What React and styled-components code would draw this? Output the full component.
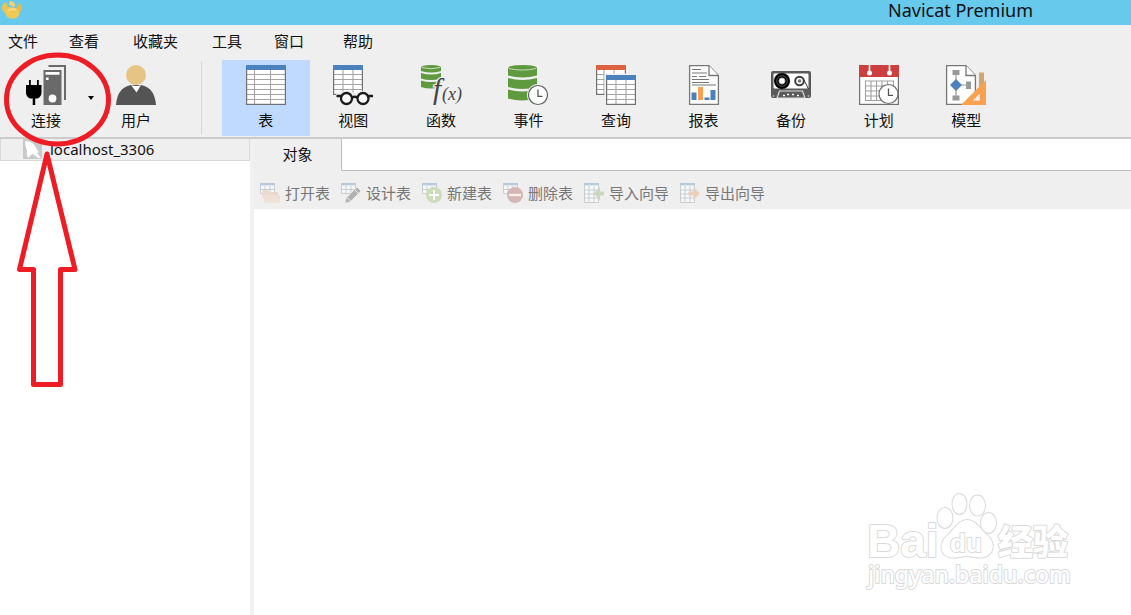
import React from "react";
import styled, { createGlobalStyle } from "styled-components";

const GlobalStyle = createGlobalStyle`
  *, *::before, *::after { box-sizing: border-box; }
  body {
    margin: 0;
    background: #fff;
    color: #111;
    font: 15px/20px "Noto Sans CJK SC", sans-serif;
  }
  button {
    margin: 0;
    padding: 0;
    border: 0;
    background: none;
    color: inherit;
    font: inherit;
    cursor: pointer;
  }
`;

const Window = styled.div`
  position: relative;
  display: flex;
  flex-direction: column;
  min-height: 100vh;
  overflow: hidden;
`;

const TitleBar = styled.header`
  display: flex;
  align-items: flex-start;
  justify-content: space-between;
  height: 25px;
  padding: 0 98px 0 2px;
  background: #67c9ec;
`;

const Title = styled.h1`
  margin: 0;
  font: 400 18px/20px "Noto Sans", sans-serif;
`;

const MenuBar = styled.nav`
  display: grid;
  grid-template-columns: 61px 64px 79px 62px 69px auto;
  justify-content: start;
  justify-items: start;
  align-items: center;
  height: 33px;
  padding: 0 0 1px 8px;
  background: #efefef;
`;

const MenuItem = styled.button`
  white-space: nowrap;
`;

const Toolbar = styled.div`
  display: flex;
  padding: 2px 0 1px 6px;
  background: #efefef;
  border-bottom: 2px solid #cbcbcb;
`;

const ToolButton = styled.button`
  display: flex;
  flex: none;
  flex-direction: column;
  align-items: center;
  gap: 5px;
  width: ${(p) => p.$width || "auto"};
  height: 76px;
  padding-top: 5px;
  background: ${(p) => (p.$active ? "#bfd9ff" : "transparent")};
`;

const DropButton = styled.button`
  display: flex;
  align-items: center;
  justify-content: center;
  width: 9px;
  height: 76px;
`;

const Separator = styled.span`
  width: 1px;
  margin: 1px 20px 1px 24px;
  background: #d8d8d8;
`;

const ToolGroup = styled.div`
  display: grid;
  grid-template-columns: repeat(9, 1fr);
  flex: 0 0 788px;
`;

const Body = styled.div`
  display: flex;
  flex: 1;
`;

const Sidebar = styled.aside`
  flex: 0 0 250px;
`;

const Connection = styled.button`
  display: flex;
  align-items: center;
  gap: 7px;
  width: 100%;
  height: 22px;
  padding: 0 0 1px 22px;
  border: 1px solid #d9d9d9;
  border-top: 0;
  background: #efefef;
  font: 15px/20px "Noto Sans", sans-serif;
`;

const Main = styled.main`
  display: flex;
  flex: 1;
  flex-direction: column;
  min-width: 0;
  border-left: 4px solid #f1f1f1;
`;

const TabStrip = styled.div`
  display: flex;
  height: 32px;
  background: #efefef;
`;

const Tab = styled.button`
  width: 87px;
  padding-bottom: 2px;
`;

const TabSpace = styled.div`
  flex: 1;
  border: solid #bdbdbd;
  border-width: 0 0 1px 1px;
  background: #fff;
`;

const ActionBar = styled.div`
  display: flex;
  gap: 11px;
  height: 38px;
  padding: 5px 6px 0;
  background: #efefef;
  color: #777;
`;

const Action = styled.button`
  display: flex;
  flex: none;
  align-items: center;
  gap: 5px;
`;

const Picture = styled.svg`
  display: block;
  flex: none;
  overflow: visible;
`;

const Annotation = styled.svg`
  position: absolute;
  top: 50px;
  left: 0;
  pointer-events: none;
`;

const Watermark = styled.svg`
  position: absolute;
  right: 56px;
  bottom: 21px;
  pointer-events: none;
`;

const Icon = ({ size = 40, children }) => (
  <Picture width={size} height={size} viewBox={`0 0 ${size} ${size}`} aria-hidden="true">
    {children}
  </Picture>
);

const Sheet = ({ x = 0, y = 0, w, h, head, cols, rows }) => (
  <g transform={`translate(${x} ${y})`}>
    <rect x="0.6" y="0.6" width={w - 1.2} height={h - 1.2} fill="#fff" />
    <path
      d={cols.map((c) => `M${c} 5V${h}`).join("") + rows.map((r) => `M0 ${r}H${w}`).join("")}
      stroke="#a4a4a4"
      strokeWidth="1.1"
    />
    <rect x="0.6" y="0.6" width={w - 1.2} height={h - 1.2} fill="none" stroke="#707070" strokeWidth="1.2" />
    <rect width={w} height="5" fill={head} />
  </g>
);

const Cylinder = ({ w, ys, ry }) => (
  <g fill="#5f9a3f">
    {ys.map(([top, bottom], i) => (
      <path
        key={top}
        d={`M0 ${top}${i ? `Q${w / 2} ${top + ry * 2} ${w} ${top}` : `Q0 0 ${w / 2} 0Q${w} 0 ${w} ${top}`}V${bottom}Q${w / 2} ${bottom + ry * 2} 0 ${bottom}Z`}
      />
    ))}
    <path d={`M1 ${ys[0][0]}Q${w / 2} ${ys[0][0] + ry * 1.6} ${w - 1} ${ys[0][0]}`} fill="none" stroke="#c5dfb8" strokeWidth="1" />
  </g>
);

const Clock = ({ x, y }) => (
  <g transform={`translate(${x} ${y})`}>
    <circle r="11" fill="#efefef" />
    <circle r="9.5" fill="#fff" stroke="#606060" strokeWidth="1.2" />
    <path d="M0 -5.5V1.3H4.5" fill="none" stroke="#555" strokeWidth="1.3" />
  </g>
);

const ConnectIcon = () => (
  <Icon>
    <path d="M3 15h1.800v5H11v-5h1.800v5h2.700v7.500q0 4-4 6H9.200V40H6.700v-6.500H4q-4-2-4-6V20h3z" fill="#000" />
    <path d="M22.5 0H40v35h-2V2H22.5z" fill="#6a6a6a" />
    <rect x="17.5" y="5" width="18" height="35" fill="#6a6a6a" />
    <path d="M19.5 7h14v2.8h-14zM20 12.5h2.6v2.6H20z" fill="#fff" />
    <circle cx="26.5" cy="33.5" r="3.9" fill="#fff" />
  </Icon>
);

const UserIcon = () => (
  <Icon>
    <circle cx="20" cy="10" r="10" fill="#e6c484" />
    <path d="M0 40C1 29 5 22 15 20h10c10 2 14 9 15 20z" fill="#545454" />
    <path d="M15 20q5 2 10 0l-4.500 7.500z" fill="#fff" />
  </Icon>
);

const TableIcon = () => (
  <Icon>
    <Sheet w={40} h={40} head="#4b82bd" cols={[8.5, 24.5]} rows={[9.5, 14.5, 19.5, 24.5, 29.5, 34.5]} />
  </Icon>
);

const ViewIcon = () => (
  <Icon>
    <Sheet w={30} h={30} head="#4b82bd" cols={[10, 20]} rows={[9.5, 14.5, 19.5, 24.5]} />
    <path d="M3 31V29L9 26.5H18L22 29L26 26.5H31V31z" fill="#efefef" />
    <g fill="#fff" stroke="#efefef" strokeWidth="4.600">
      <circle cx="13.5" cy="33.5" r="5.5" />
      <circle cx="30" cy="33.5" r="5.5" />
    </g>
    <g fill="#fff" stroke="#1c1c1c" strokeWidth="2.3">
      <path d="M3.500 31H9M35 31h5M19 32.500q2.800-1.500 5.600 0" fill="none" />
      <circle cx="13.5" cy="33.5" r="5.5" />
      <circle cx="30" cy="33.5" r="5.5" />
    </g>
  </Icon>
);

const FunctionIcon = () => (
  <Icon>
    <Cylinder w={20} ry={1.6} ys={[[2.5, 6], [8, 13.5], [15.5, 22]]} />
    <g fill="#444" stroke="#efefef" strokeWidth="2.5" paintOrder="stroke" fontFamily="Liberation Serif, serif" fontStyle="italic">
      <text x="12" y="34" fontSize="29">f</text>
      <text x="21" y="35" fontSize="18">(x)</text>
    </g>
  </Icon>
);

const EventIcon = () => (
  <Icon>
    <Cylinder w={29} ry={2} ys={[[3.5, 10.5], [13, 22], [24.500, 33.500]]} />
    <Clock x={30} y={30} />
  </Icon>
);

const QueryIcon = () => (
  <Icon>
    <Sheet w={30} h={30} head="#dc6240" cols={[8, 18]} rows={[9.5, 14.5, 19.5, 24.5]} />
    <rect x="8.500" y="8.500" width="32" height="32" fill="#efefef" />
    <Sheet x={10} y={10} w={30} h={30} head="#4b82bd" cols={[10, 20]} rows={[9.5, 14.5, 19.5, 24.5]} />
  </Icon>
);

const ReportIcon = () => (
  <Icon>
    <path d="M5.600.6H25L34.400 10.500V39.400H5.600z" fill="#fff" stroke="#777" strokeWidth="1.3" />
    <path d="M25 .6V10.500H34.400" fill="#fff" stroke="#777" strokeWidth="1.3" />
    <path d="M8 4.500H17M8 8H23M8 11.500H13M15 11.500H22M8 14.500H25M8 17.500H25M8 20H32" stroke="#777" strokeWidth="1.2" />
    <path d="M7.500 27.500h5V35h-5zM20.500 32.500h5V35h-5zM26.500 25h5V35h-5z" fill="#4b82bd" />
    <path d="M14 22h5V35h-5z" fill="#f9a14e" />
  </Icon>
);

const BackupIcon = () => (
  <Icon>
    <rect x="0" y="6" width="40" height="27" rx="2" fill="#5a5a5a" />
    <rect x="2.500" y="8.500" width="35" height="15" rx="1" fill="#fff" />
    <circle cx="11" cy="16" r="8" fill="#000" />
    <circle cx="11" cy="16" r="5.300" fill="none" stroke="#777" strokeWidth=".7" />
    <circle cx="11" cy="16" r="3" fill="#fff" stroke="#bbb" />
    <circle cx="28.500" cy="16" r="4.300" fill="#fff" stroke="#3c3c3c" strokeWidth="2" />
    <circle cx="28.500" cy="16" r="1.800" fill="#777" />
    <path d="M33 15l4.500 9" stroke="#333" />
    <path d="M6 33l2.500-7h23l2.500 7z" fill="#5a5a5a" stroke="#ddd" strokeWidth="1.200" />
    <path d="M12 30.500h2m2-1h2m3 0h2m3 1h2" stroke="#fff" strokeWidth="1.4" />
    <circle cx="2.500" cy="31" r=".8" fill="#ddd" />
    <circle cx="37.500" cy="31" r=".8" fill="#ddd" />
  </Icon>
);

const PlanIcon = () => (
  <Icon>
    <rect x=".6" y=".6" width="38.800" height="38.800" fill="#fff" stroke="#707070" strokeWidth="1.2" />
    <rect width="40" height="12" fill="#cd3f3e" />
    <path d="M10.500 0V7M30.500 0V7" stroke="#fff" strokeWidth="1.6" />
    <circle cx="10.500" cy="8" r="2.500" fill="#fff" />
    <circle cx="30.500" cy="8" r="2.500" fill="#fff" />
    <path
      d="M6 16H35M6 21H35M6 26H35M6 31H35M6 35.500H30M6.500 16V36M12 16V36M17.500 16V36M23 16V36M28.500 16V36M34.500 16V30"
      stroke="#a0a0a0"
      strokeWidth="1.1"
    />
    <g transform="translate(29.500 29)">
      <circle r="9.5" fill="#fff" stroke="#707070" strokeWidth="1.2" />
      <path d="M0 -5.500V1.300H4.500" fill="none" stroke="#555" strokeWidth="1.3" />
    </g>
  </Icon>
);

const ModelIcon = () => (
  <Icon>
    <path d="M.6.6H20L29.400 10.500V39.400H.6z" fill="#fff" stroke="#777" strokeWidth="1.3" />
    <path d="M20 .6V10.500H29.400" fill="#fff" stroke="#777" strokeWidth="1.3" />
    <path d="M10 8V32M10 20H22" stroke="#999" strokeWidth="1.2" />
    <path d="M6.500 5h7v5h-7zM6.500 30.500h7v5h-7zM20 16.500h5v7.500h-5z" fill="#999" />
    <path d="M10 14l6 6-6 6-6-6z" fill="#4b82bd" />
    <rect x="33" y="7.500" width="5" height="20" fill="#d0a673" />
    <path d="M15 40L40 15V40zM27 35.500H33.500V29z" fill="#f9a14e" fillRule="evenodd" />
    <path d="M27 35.500H33.500V29z" fill="#efefef" />
  </Icon>
);

const SmallSheet = ({ tall }) => (
  <g fill="none" stroke="#c6ced4">
    <path d={tall ? "M.5 1V19.500H14.500V1M5 3V19M10 3V19M1 7H14M1 11H14M1 15H14" : "M.5 1V10.500H14.500V1M5 3V10M10 3V10M1 6.500H14"} fill="#f8f8f8" />
    <path d="M0 1.200H15" stroke="#b7cbdc" strokeWidth="2.400" />
  </g>
);

const OpenIcon = () => (
  <Icon size={20}>
    <SmallSheet />
    <path d="M3 7h5l1.500 2H18v4h2l-1 6.500H5L2 11z" fill="#ead9ce" />
    <path d="M2 12h15l3 7.500H4.500z" fill="#efdfd5" />
  </Icon>
);
const DesignIcon = () => (
  <Icon size={20}>
    <SmallSheet />
    <path d="M16 4l4 4-11 11-5.200 1.200 1.400-5.200z" fill="#b2b2b2" stroke="#efefef" strokeWidth=".7" />
    <path d="M13.500 6.500l4 4M6 14.500l3.500 3.500" stroke="#efefef" />
  </Icon>
);
const NewIcon = () => (
  <Icon size={20}>
    <SmallSheet />
    <circle cx="12" cy="12" r="8" fill="#cbdcb9" />
    <path d="M12 7v10M7 12h10" stroke="#fff" strokeWidth="2" />
  </Icon>
);
const DeleteIcon = () => (
  <Icon size={20}>
    <SmallSheet />
    <circle cx="12" cy="12" r="8" fill="#d5b6b4" />
    <path d="M6 12h12" stroke="#f7eeee" strokeWidth="2.400" />
  </Icon>
);
const ImportIcon = () => (
  <Icon size={20}>
    <SmallSheet tall />
    <path d="M20 8.500v4h-4v4.500l-6.500-6.500L16 4v4.500z" fill="#c9d9bd" />
  </Icon>
);
const ExportIcon = () => (
  <Icon size={20}>
    <SmallSheet tall />
    <path d="M8.500 8.500v4h5v4.500l6.500-6.500L13.500 4v4.500z" fill="#ead0b9" />
  </Icon>
);

const AppLogo = () => (
  <Icon size={20}>
    <path d="M0 8Q0 3 4.500 2.500Q5 7 9.500 8Q5 9 4 13.500Q0 12 0 8z" fill="#e9c457" />
    <path d="M8 1q6 .5 5 5.500-4 .5-6-2z" fill="#f3d477" />
    <path d="M14 7.500q3-1 2.500-4.500 5 2 3 7-1.500 3.500-4.500 3 1-3-1-5.500z" fill="#e4b94b" />
    <ellipse cx="10.500" cy="13" rx="7" ry="5.800" fill="#f0c955" />
    <path d="M6 11q4-3.500 8-1" fill="none" stroke="#f8dc8c" strokeWidth="1.500" />
  </Icon>
);

const DolphinIcon = () => (
  <Icon size={20}>
    <rect width="19" height="20" fill="#c9c9c9" />
    <path d="M2 2q7 0 10 5 2 4 4 6l-2 1 4 5h-3l-5-4-2 1-3 3q-2-3-1-7-2-5-2-10z" fill="#fff" />
  </Icon>
);

const menus = ["文件", "查看", "收藏夹", "工具", "窗口", "帮助"];

const tools = [
  ["表", TableIcon],
  ["视图", ViewIcon],
  ["函数", FunctionIcon],
  ["事件", EventIcon],
  ["查询", QueryIcon],
  ["报表", ReportIcon],
  ["备份", BackupIcon],
  ["计划", PlanIcon],
  ["模型", ModelIcon],
];

const actions = [
  ["打开表", OpenIcon],
  ["设计表", DesignIcon],
  ["新建表", NewIcon],
  ["删除表", DeleteIcon],
  ["导入向导", ImportIcon],
  ["导出向导", ExportIcon],
];

export default function App() {
  return (
    <Window>
      <GlobalStyle />
      <TitleBar>
        <AppLogo />
        <Title>Navicat Premium</Title>
      </TitleBar>
      <MenuBar>
        {menus.map((name) => (
          <MenuItem key={name}>{name}</MenuItem>
        ))}
      </MenuBar>
      <Toolbar>
        <ToolButton $width="80px">
          <ConnectIcon />
          连接
        </ToolButton>
        <DropButton aria-label="连接选项">
          <Picture width="6" height="4" viewBox="0 0 6 4" aria-hidden="true">
            <path d="M0 0H6L3 4z" fill="#000" />
          </Picture>
        </DropButton>
        <ToolButton $width="82px">
          <UserIcon />
          用户
        </ToolButton>
        <Separator />
        <ToolGroup>
          {tools.map(([name, Glyph], i) => (
            <ToolButton key={name} $active={i === 0}>
              <Glyph />
              {name}
            </ToolButton>
          ))}
        </ToolGroup>
      </Toolbar>
      <Body>
        <Sidebar>
          <Connection>
            <DolphinIcon />
            localhost_3306
          </Connection>
        </Sidebar>
        <Main>
          <TabStrip>
            <Tab>对象</Tab>
            <TabSpace />
          </TabStrip>
          <ActionBar>
            {actions.map(([name, Glyph]) => (
              <Action key={name}>
                <Glyph />
                {name}
              </Action>
            ))}
          </ActionBar>
        </Main>
      </Body>
      <Annotation width="120" height="340" viewBox="0 50 120 340" aria-hidden="true">
        <g fill="none" stroke="#ee1c24" strokeWidth="5" strokeLinejoin="round">
          <ellipse cx="57.500" cy="99.500" rx="51" ry="44.500" />
          <path d="M47 154L19.500 269.500H33.500V384.500H60.500V269.500H75z" />
        </g>
      </Annotation>
      <Watermark width="210" height="104" viewBox="0 0 210 104" role="img" aria-label="Baidu">
        <g fill="#fff" stroke="#dadada" strokeWidth="2" strokeLinejoin="round" paintOrder="stroke">
          <text x="2" y="67" fontFamily="Liberation Sans, sans-serif" fontWeight="700" fontSize="46">Bai</text>
          <text x="133" y="65" fontFamily="Noto Sans CJK SC, sans-serif" fontWeight="900" fontSize="35">经验</text>
          <g strokeWidth="2">
            <ellipse cx="80" cy="28" rx="7.500" ry="10" />
            <ellipse cx="94.500" cy="14" rx="7" ry="10" />
            <ellipse cx="112.500" cy="15.500" rx="7.500" ry="10" />
            <ellipse cx="123.500" cy="33" rx="7.500" ry="10" />
            <path d="M102 30C111 30 115 39 122 45C132 54 128 66 117 67.500C110 68 106 66 102 66S92 68 86 67.500C75 66 73 53 83 45C89 40 93 30 102 30z" />
          </g>
          <text x="85" y="62" fontFamily="Liberation Sans, sans-serif" fontWeight="700" fontSize="26">du</text>
          <text x="3" y="93" fontFamily="Noto Sans, sans-serif" fontWeight="500" fontSize="23">jingyan.baidu.com</text>
        </g>
      </Watermark>
    </Window>
  );
}
